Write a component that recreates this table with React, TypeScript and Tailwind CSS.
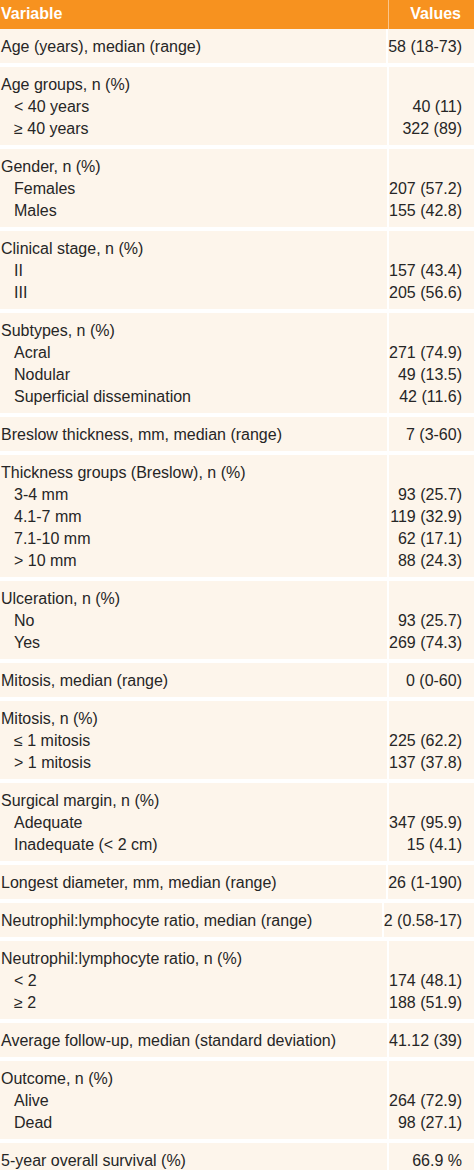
import React from "react";

type Line = { label: string; value?: string; sub?: boolean };

const rows: Line[][] = [
  [{ label: "Age (years), median (range)", value: "58 (18-73)" }],
  [
    { label: "Age groups, n (%)" },
    { label: "< 40 years", value: "40 (11)", sub: true },
    { label: "≥ 40 years", value: "322 (89)", sub: true },
  ],
  [
    { label: "Gender, n (%)" },
    { label: "Females", value: "207 (57.2)", sub: true },
    { label: "Males", value: "155 (42.8)", sub: true },
  ],
  [
    { label: "Clinical stage, n (%)" },
    { label: "II", value: "157 (43.4)", sub: true },
    { label: "III", value: "205 (56.6)", sub: true },
  ],
  [
    { label: "Subtypes, n (%)" },
    { label: "Acral", value: "271 (74.9)", sub: true },
    { label: "Nodular", value: "49 (13.5)", sub: true },
    { label: "Superficial dissemination", value: "42 (11.6)", sub: true },
  ],
  [{ label: "Breslow thickness, mm, median (range)", value: "7 (3-60)" }],
  [
    { label: "Thickness groups (Breslow), n (%)" },
    { label: "3-4 mm", value: "93 (25.7)", sub: true },
    { label: "4.1-7 mm", value: "119 (32.9)", sub: true },
    { label: "7.1-10 mm", value: "62 (17.1)", sub: true },
    { label: "> 10 mm", value: "88 (24.3)", sub: true },
  ],
  [
    { label: "Ulceration, n (%)" },
    { label: "No", value: "93 (25.7)", sub: true },
    { label: "Yes", value: "269 (74.3)", sub: true },
  ],
  [{ label: "Mitosis, median (range)", value: "0 (0-60)" }],
  [
    { label: "Mitosis, n (%)" },
    { label: "≤ 1 mitosis", value: "225 (62.2)", sub: true },
    { label: "> 1 mitosis", value: "137 (37.8)", sub: true },
  ],
  [
    { label: "Surgical margin, n (%)" },
    { label: "Adequate", value: "347 (95.9)", sub: true },
    { label: "Inadequate (< 2 cm)", value: "15 (4.1)", sub: true },
  ],
  [{ label: "Longest diameter, mm, median (range)", value: "26 (1-190)" }],
  [{ label: "Neutrophil:lymphocyte ratio, median (range)", value: "2 (0.58-17)" }],
  [
    { label: "Neutrophil:lymphocyte ratio, n (%)" },
    { label: "< 2", value: "174 (48.1)", sub: true },
    { label: "≥ 2", value: "188 (51.9)", sub: true },
  ],
  [{ label: "Average follow-up, median (standard deviation)", value: "41.12 (39)" }],
  [
    { label: "Outcome, n (%)" },
    { label: "Alive", value: "264 (72.9)", sub: true },
    { label: "Dead", value: "98 (27.1)", sub: true },
  ],
  [{ label: "5-year overall survival (%)", value: "66.9 %" }],
];

export default function App() {
  return (
    <div className="w-[474px] h-[1170px] overflow-hidden bg-[#fdf5eb] font-['Liberation_Sans',Arial,sans-serif] text-[16px] text-[#262626]">
      <div className="flex h-[29px] bg-[#f7921f] font-bold text-white">
        <div className="w-[389px] border-r border-[#fbc58a] leading-[27px] pl-[1px]">
          Variable
        </div>
        <div className="flex-1 text-right pr-[13px] leading-[27px]">Values</div>
      </div>
      {rows.map((group, i) => (
        <div key={i} className="flex border-b-4 border-white">
          <div className="w-[389px] border-r-2 border-white pt-[7px] pb-[5px] pl-[1px]">
            {group.map((l, j) => (
              <div key={j} className={`leading-[22px] whitespace-nowrap ${l.sub ? "pl-[13px]" : ""}`}>
                {l.label}
              </div>
            ))}
          </div>
          <div className="flex-1 pt-[7px] pb-[5px] pr-[12px] text-right">
            {group.map((l, j) => (
              <div key={j} className="leading-[22px] whitespace-nowrap">
                {l.value ?? "\u00a0"}
              </div>
            ))}
          </div>
        </div>
      ))}
    </div>
  );
}
